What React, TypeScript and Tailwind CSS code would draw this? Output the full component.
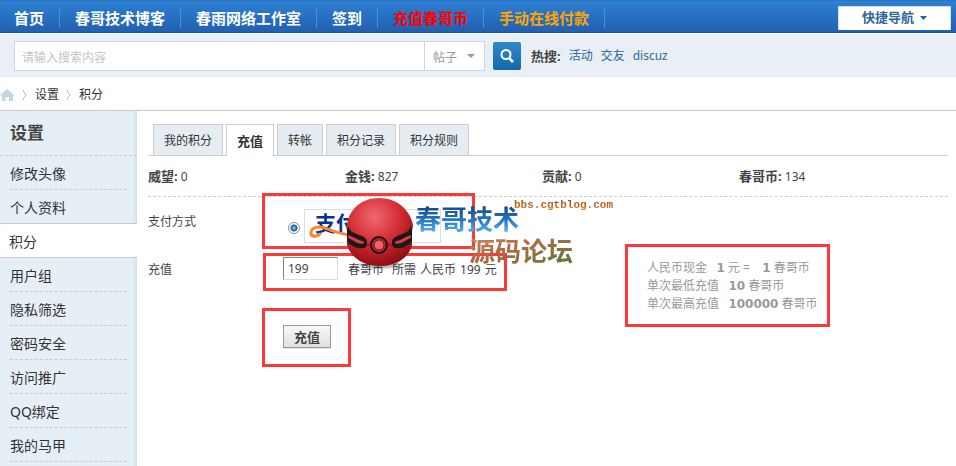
import React from 'react';

interface NavItem {
  label: string;
  color: string;
}

const NAV_ITEMS: NavItem[] = [
  { label: '首页', color: 'text-white' },
  { label: '春哥技术博客', color: 'text-white' },
  { label: '春雨网络工作室', color: 'text-white' },
  { label: '签到', color: 'text-white' },
  { label: '充值春哥币', color: 'text-[#ff0000]' },
  { label: '手动在线付款', color: 'text-[#ffa500]' },
];

const HOT_WORDS = ['活动', '交友', 'discuz'];

const MENU = ['修改头像', '个人资料', '积分', '用户组', '隐私筛选', '密码安全', '访问推广', 'QQ绑定', '我的马甲'];
const ACTIVE_MENU = '积分';

const TABS = ['我的积分', '充值', '转帐', '积分记录', '积分规则'];
const ACTIVE_TAB = '充值';

const BALANCES = [
  { label: '威望', value: 0 },
  { label: '金钱', value: 827 },
  { label: '贡献', value: 0 },
  { label: '春哥币', value: 134 },
];

// Red frame drawn around the block it is placed in
const Frame = ({ className }: { className: string }) => (
  <span className={`absolute border-3 border-[#fb3939] pointer-events-none ${className}`} />
);

const TopNav = () => (
  <nav className="flex h-[33px] items-center justify-between border-t border-b border-t-[#2a74c0] border-b-[#1c5494] bg-linear-to-b from-[#2e80d3] to-[#2160b0] pt-0.5 pr-[5px]">
    <ul className="flex">
      {NAV_ITEMS.map((item, i) => (
        <li key={item.label} className={`flex h-5 items-center border-r border-[#4d8fd6] pr-[15px] ${i === 0 ? 'pl-3.5' : 'pl-[15px]'}`}>
          <a href="#" className={`text-[15px] leading-5 font-bold whitespace-nowrap ${item.color}`}>{item.label}</a>
        </li>
      ))}
    </ul>
    <button className="flex h-6 w-[113px] items-center justify-center gap-1.5 border border-b-0 border-[#cfe0f0] bg-white text-[13px] font-bold text-[#336699]">
      快捷导航
      <svg width="7" height="4" viewBox="0 0 7 4" aria-hidden="true"><path d="M0 0h7L3.500 4z" fill="#0b67ae" /></svg>
    </button>
  </nav>
);

const SearchBar = () => (
  <form className="mt-px flex h-[43px] items-center bg-[#e8eff5] pl-3.5" onSubmit={(e) => e.preventDefault()}>
    <div className="flex h-[30px] w-[471px] border border-[#ced9df] bg-white">
      <input
        type="text"
        aria-label="搜索内容"
        placeholder="请输入搜索内容"
        className="min-w-0 flex-1 pt-1 pl-[7px] text-xs outline-none placeholder:text-[#c4c4c4]"
      />
      <div className="relative w-[60px] border-l border-[#ced9df]">
        <select aria-label="搜索类型" className="h-full w-full appearance-none pt-1 pl-2 text-xs text-[#999] outline-none">
          <option>帖子</option>
        </select>
        <svg className="pointer-events-none absolute top-3 right-[9px]" width="8" height="4" viewBox="0 0 8 4" aria-hidden="true"><path d="M0 0h8L4 4z" fill="#999" /></svg>
      </div>
    </div>
    <button type="submit" aria-label="搜索" className="ml-2 flex size-7 items-center justify-center rounded-xs bg-linear-to-b from-[#3287c8] to-[#1169ac]">
      <svg width="14" height="14" viewBox="0 0 14 14" fill="none" stroke="#fff" aria-hidden="true">
        <circle cx="6" cy="5.500" r="4.500" strokeWidth="2" />
        <path d="M9 9l4 4" strokeWidth="2.500" />
      </svg>
    </button>
    <div className="ml-2.5 flex gap-2 text-xs text-[#336699]">
      <strong className="text-[13px] leading-4 text-[#444]">热搜:</strong>
      {HOT_WORDS.map((word) => (
        <a key={word} href="#" className="leading-4">{word}</a>
      ))}
    </div>
  </form>
);

const Chevron = () => (
  <svg width="4" height="10" viewBox="0 0 4 10" fill="none" stroke="#b5b5b5" aria-hidden="true"><path d="M.5 0v1.500L3 5 .5 8.500V10" /></svg>
);

const Breadcrumb = () => (
  <div className="flex h-[34px] items-center border-b border-[#c9c9c9] pt-[3px] text-xs text-[#333]">
    <a href="#" aria-label="首页">
      <svg width="15" height="12" viewBox="0 0 15 12" fill="#c3d5e2" aria-hidden="true"><path d="M7 0l7.500 6.500H13V12H9V8H5.500v4H2V6.500H-.5z" /></svg>
    </a>
    <span className="ml-2 flex items-center gap-2">
      <Chevron />
      <a href="#">设置</a>
    </span>
    <span className="ml-2 flex items-center gap-2">
      <Chevron />
      <a href="#">积分</a>
    </span>
  </div>
);

const Sidebar = () => (
  <aside className="w-[137px] shrink-0 bg-[#e6eff6] bg-linear-to-r from-[#e6eff6] from-97% to-[#d3dfe8]">
    <h2 className="h-[45px] border-b border-dashed border-[#cdcdcd] pl-2.5 text-[17px] leading-[44px] font-bold text-[#444]">设置</h2>
    <ul className="text-sm text-[#333]">
      {MENU.map((item, i) => {
        if (item === ACTIVE_MENU) {
          return (
            <li key={item} className="h-[34px] border-b border-[#c9c9c9] bg-white pl-[9px] leading-9">
              <a href="#">{item}</a>
            </li>
          );
        }
        const beforeActive = MENU[i + 1] === ACTIVE_MENU;
        return (
          <li key={item} className={`h-[34px] leading-9 ${beforeActive ? 'border-b border-[#c9c9c9] pl-2.5' : 'mr-2.5 ml-2.5 border-b border-dashed border-[#c9cdd0]'}`}>
            <a href="#">{item}</a>
          </li>
        );
      })}
    </ul>
  </aside>
);

const AlipayLogo = () => (
  <svg className="overflow-visible" width="135" height="32" viewBox="0 0 135 32" role="img" aria-label="支付宝">
    <text x="10" y="21" fill="#0a3190" fontSize="21" fontWeight="700" fontFamily="'Noto Sans CJK SC', sans-serif">支付</text>
    <path d="M15 24c-5 4-10 2-9-2 1-5 8-6 14-4 8 3 14 6 26 7" fill="none" stroke="#fa8532" strokeWidth="3" strokeLinecap="round" />
  </svg>
);

const Ball = () => (
  <svg width="70" height="74" viewBox="0 0 70 74" aria-hidden="true">
    <defs>
      <radialGradient id="ball" cx="42%" cy="28%" r="75%">
        <stop offset="0" stopColor="#ee6a6e" />
        <stop offset=".5" stopColor="#d62d35" />
        <stop offset="1" stopColor="#8c0b12" />
      </radialGradient>
      <radialGradient id="shade">
        <stop offset="0" stopColor="#000" stopOpacity=".5" />
        <stop offset="1" stopColor="#000" stopOpacity="0" />
      </radialGradient>
    </defs>
    <ellipse cx="35" cy="68" rx="27" ry="5" fill="url(#shade)" />
    <path d="M2 28C4 12 17 1 34 1s31 11 34 27c0 3-1 4-1 7v13c-3 13-16 21-32 21S6 61 2 48V35c0-2-1-4 0-7z" fill="url(#ball)" />
    <path d="M2 46c10 4 20 3 24 1M67 46c-10 4-20 3-24 1" fill="none" stroke="#7a0d14" />
    <path d="M3 29c2 6 6 7 11 9 6 2 8 4 8 8 0 5-4 6-9 5C8 50 5 47 2 44V34zM66 29c-2 6-6 7-11 9-6 2-8 4-8 8 0 5 4 6 9 5 5-1 8-4 11-7V34z" fill="#1b1819" />
    <path d="M3 38c5 1 9 5 15 6 2 1 1 3-1 3-5 0-9-4-14-6zM66 38c-5 1-9 5-15 6-2 1-1 3 1 3 5 0 9-4 14-6z" fill="#d8434a" stroke="#4b0d11" strokeWidth=".5" />
    <circle cx="34" cy="48" r="8" fill="#b8292e" stroke="#1a1012" strokeWidth="2" />
    <circle cx="34" cy="48" r="5" fill="#ee6266" stroke="#7d1319" />
  </svg>
);

// Site stamp lying over the payment form
const SiteStamp = () => (
  <div className="pointer-events-none absolute top-0 left-[197px] z-10 h-[74px] w-[270px]">
    <Ball />
    <span className="absolute top-0 left-[169px] bg-linear-to-b from-[#8e3a0a] to-[#f08a2a] bg-clip-text font-['Liberation_Mono',monospace] text-[11px] leading-4 font-bold text-transparent">bbs.cgtblog.com</span>
    <span className="absolute top-1.5 left-[70px] bg-linear-to-b from-[#123f78] via-[#2372bf] to-[#62bdf5] bg-clip-text text-[26px] leading-8 font-bold whitespace-nowrap text-transparent">春哥技术</span>
    <span className="absolute top-[38px] left-[124px] bg-linear-to-br from-[#c98a66] via-[#b5673f] via-40% to-[#3f7a3a] bg-clip-text text-[26px] leading-8 font-bold whitespace-nowrap text-transparent">源码论坛</span>
  </div>
);

const Amount = ({ children }: { children: React.ReactNode }) => (
  <b className="font-['DejaVu_Sans',sans-serif]">{children}</b>
);

const RechargeForm = () => (
  <form className="relative text-xs leading-[18px]" onSubmit={(e) => e.preventDefault()}>
    <SiteStamp />
    <div className="flex h-[54px] pt-3">
      <span className="w-[135px] pt-1">支付方式</span>
      <div className="relative flex h-[34px] w-[158px] items-center">
        <Frame className="-top-4 -right-[34px] -bottom-1.5 -left-[21px]" />
        <label className="flex items-center">
          <input
            type="radio"
            name="bank"
            defaultChecked
            className="mt-1 ml-[5px] size-3 appearance-none rounded-full border border-[#8b8b8b] bg-radial from-[#4fc3f5] from-10% via-[#16548c] via-45% to-white to-55%"
          />
          <span className="ml-1 border border-[#ddd]"><AlipayLogo /></span>
        </label>
      </div>
    </div>
    <div className="flex pt-1.5">
      <label htmlFor="amount" className="w-[135px] pt-1">充值</label>
      <div className="w-[364px]">
        <div className="relative flex h-[23px] w-[215px] items-center whitespace-nowrap">
          <Frame className="-top-1 -right-[9px] -bottom-[11px] -left-5" />
          <input
            id="amount"
            type="text"
            defaultValue="199"
            className="h-[23px] w-[55px] border border-t-[#848484] border-r-[#ddd] border-b-[#ddd] border-l-[#848484] bg-white px-1 text-xs outline-none"
          />
          <span className="ml-2.5 pt-0.5">春哥币</span>
          <span className="ml-2 flex gap-1 pt-0.5">
            <span>所需</span>
            <span>人民币</span>
            <span>199</span>
            <span>元</span>
          </span>
        </div>
      </div>
      <div className="relative mt-0.5 w-[170px] whitespace-nowrap text-[#999]">
        <Frame className="-top-[15px] -right-[13px] -bottom-3.5 -left-[22px]" />
        <p>人民币现金 &nbsp; <Amount>1</Amount> 元 = &nbsp;&nbsp; <Amount>1</Amount> 春哥币</p>
        <p>单次最低充值 &nbsp; <Amount>10</Amount> 春哥币</p>
        <p>单次最高充值 &nbsp; <Amount>100000</Amount> 春哥币</p>
      </div>
    </div>
    <div className="pt-3 pl-[135px]">
      <div className="relative w-12">
        <Frame className="-top-[17px] -right-5 -bottom-[19px] -left-[21px]" />
        <button type="submit" className="block h-[23px] w-12 border border-[#999] bg-linear-to-b from-[#f8f8f8] to-[#e0e0e0] text-[13px] font-bold shadow-[0_1px_0_#e5e5e5]">充值</button>
      </div>
    </div>
  </form>
);

const App = () => (
  <div className="flex min-h-screen flex-col bg-white font-['Noto_Sans','Noto_Sans_CJK_SC',sans-serif] text-[#444]">
    <TopNav />
    <SearchBar />
    <Breadcrumb />
    <div className="flex flex-1">
      <Sidebar />
      <main className="min-w-0 flex-1 pt-[13px] pr-2 pl-[11px]">
        <ul className="flex h-8 gap-[3px] border-b border-[#cdcdcd] pl-[5px]">
          {TABS.map((tab) => (
            <li key={tab} className={`border border-b-0 border-[#cdcdcd] px-2.5 leading-8 whitespace-nowrap text-[#333] ${tab === ACTIVE_TAB ? '-mb-px bg-white text-[13px] font-bold' : 'bg-[#e5edf2] text-xs'}`}>
              <a href="#">{tab}</a>
            </li>
          ))}
        </ul>
        <ul className="grid h-[41px] grid-cols-4 border-b border-dashed border-[#cdcdcd] pr-3 text-xs leading-10">
          {BALANCES.map(({ label, value }) => (
            <li key={label}><strong className="text-[13px]">{label}:</strong> {value}</li>
          ))}
        </ul>
        <RechargeForm />
      </main>
    </div>
  </div>
);

export default App;
